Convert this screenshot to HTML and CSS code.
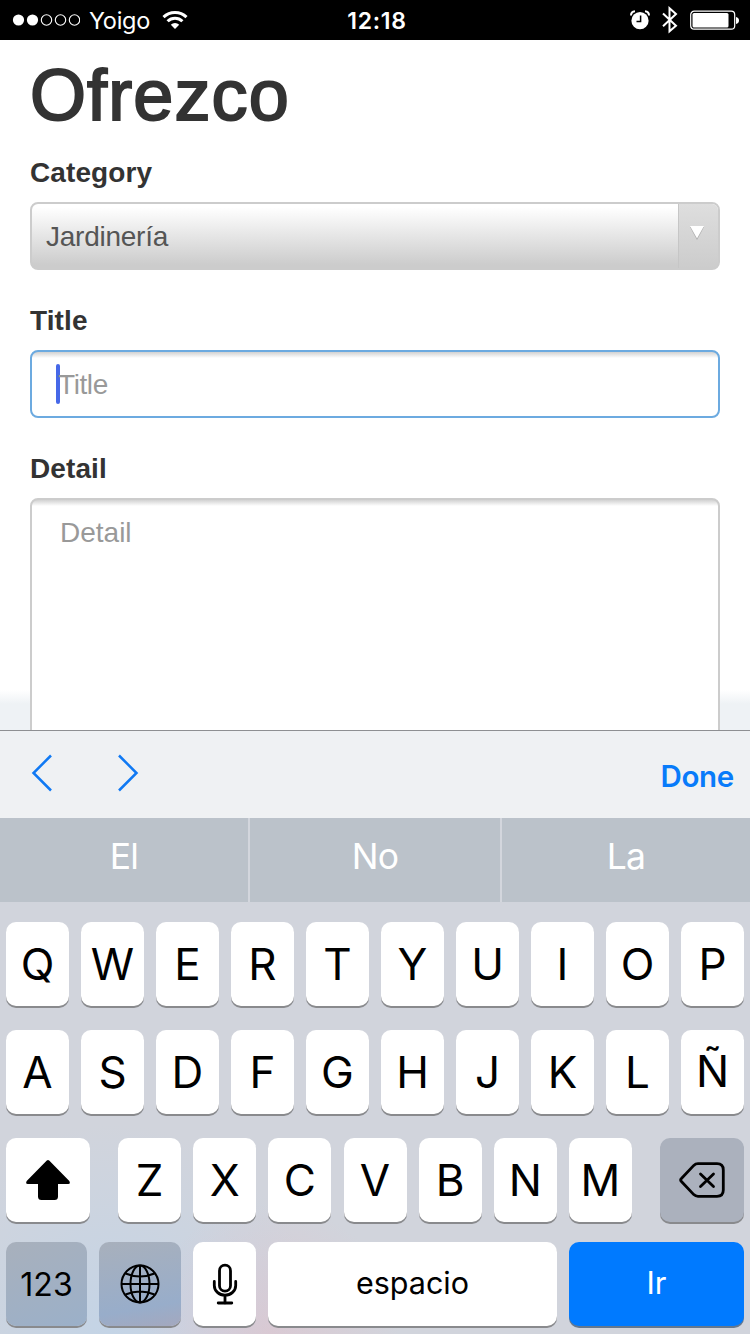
FILE: index.html
```html
<!DOCTYPE html>
<html lang="es">
<head>
<meta charset="utf-8">
<title>Ofrezco</title>
<link rel="stylesheet" href="styles.css">
</head>
<body>
<header class="status">
  <div class="carrier">
    <svg class="signal" width="68" height="12" viewBox="0 0 68 12"><g fill="#fff"><circle cx="6.500" cy="6" r="5.6"/><circle cx="20.500" cy="6" r="5.6"/></g><g fill="none" stroke="#fff" stroke-width="1.1"><circle cx="34.500" cy="6" r="5.2"/><circle cx="48.500" cy="6" r="5.2"/><circle cx="62.500" cy="6" r="5.2"/></g></svg>
    <span class="carrier-name">Yoigo</span>
    <svg width="26" height="20" viewBox="0 0 26 20"><g fill="none" stroke="#fff" stroke-width="3"><path d="M1.5 7.2a16.5 16.5 0 0 1 23 0"/><path d="M5.6 11.3a10.5 10.5 0 0 1 14.8 0"/></g><path d="M13 19l-4.2-4.2a6 6 0 0 1 8.4 0z" fill="#fff"/></svg>
  </div>
  <span class="clock">12:18</span>
  <div class="indicators">
    <svg width="20" height="20" viewBox="0 0 20 20"><circle cx="10" cy="10.7" r="8.6" fill="#fff"/><path d="M1 5.5Q1 1.6 5 1.3M15 1.3Q19 1.6 19 5.5" fill="none" stroke="#fff" stroke-width="2"/><path d="M10.6 5.5v6H6.5" fill="none" stroke="#000" stroke-width="1.5"/></svg>
    <svg width="16" height="28" viewBox="0 0 16 28"><path d="M1 7.5l13 12.2-6.5 5.6V2.2L14 8 1 20.2" fill="none" stroke="#fff" stroke-width="2"/></svg>
    <svg width="50" height="20" viewBox="0 0 50 20"><rect x=".7" y="1.2" width="44" height="18" rx="3.5" fill="none" stroke="#fff" stroke-width="1.2"/><rect x="2.5" y="3" width="36" height="14.5" rx="1.5" fill="#fff"/><path d="M46 7c4 .4 4 6.600 0 7z" fill="#fff"/></svg>
  </div>
</header>
<main class="page">
  <h1 class="heading">Ofrezco</h1>
  <div class="field">
    <label class="label">Category</label>
    <div class="control select"><span class="select-value">Jardinería</span><span class="select-arrow"><svg width="16" height="16" viewBox="0 0 16 16"><path d="M1 2h14L8 15z" fill="#aaa"/><path d="M1 1h14L8 13.500z" fill="#fff"/></svg></span></div>
  </div>
  <div class="field">
    <label class="label">Title</label>
    <div class="control input focused"><span class="caret"></span><span class="placeholder">Title</span></div>
  </div>
  <div class="field">
    <label class="label">Detail</label>
    <div class="control input textarea"><span class="placeholder">Detail</span></div>
  </div>
</main>
<nav class="toolbar">
  <div class="arrows">
    <svg width="22" height="38" viewBox="0 0 22 38"><path d="M20 1.500L2.500 19 20 36.500" fill="none" stroke="#1079f3" stroke-width="2.500"/></svg>
    <svg width="22" height="38" viewBox="0 0 22 38"><path d="M2 1.500L19.500 19 2 36.500" fill="none" stroke="#1079f3" stroke-width="2.500"/></svg>
  </div>
  <span class="done">Done</span>
</nav>
<section class="suggestions"><span>El</span><span>No</span><span>La</span></section>
<section class="keyboard">
  <div class="row ten"><b class="key">Q</b><b class="key">W</b><b class="key">E</b><b class="key">R</b><b class="key">T</b><b class="key">Y</b><b class="key">U</b><b class="key">I</b><b class="key">O</b><b class="key">P</b></div>
  <div class="row ten"><b class="key">A</b><b class="key">S</b><b class="key">D</b><b class="key">F</b><b class="key">G</b><b class="key">H</b><b class="key">J</b><b class="key">K</b><b class="key">L</b><b class="key enye">Ñ</b></div>
  <div class="row shift-row">
    <b class="key wide"><svg width="46" height="42" viewBox="0 0 46 42"><path d="M21.800 1.500q1.200-1 2.400 0L44.300 22q1.500 3-1 3H33v12.500q0 3.500-3.500 3.500h-13Q13 41 13 37.500V25H2.700q-2.500 0-1-3z"/></svg></b>
    <div class="letters"><b class="key">Z</b><b class="key">X</b><b class="key">C</b><b class="key">V</b><b class="key">B</b><b class="key">N</b><b class="key">M</b></div>
    <b class="key wide dark"><svg width="46" height="36" viewBox="0 0 46 36"><g fill="none" stroke="#000" stroke-width="2.800" stroke-linejoin="round" stroke-linecap="round"><path d="M19 1.700h19q6.300 0 6.300 6.300v20q0 6.300-6.300 6.300H19q-2.500 0-4.200-1.700L2.200 19.200q-1.200-1.200 0-2.400L14.800 3.400Q16.500 1.700 19 1.700z"/><path d="M21.500 12l13 12.500M34.500 12l-13 12.500"/></g></svg></b>
  </div>
  <div class="row bottom">
    <b class="key dark numbers">123</b>
    <b class="key dark globe"><svg width="40" height="40" viewBox="0 0 40 40"><g fill="none" stroke="#000" stroke-width="2"><circle cx="20" cy="20" r="18.500"/><ellipse cx="20" cy="20" rx="9.500" ry="18.500"/><path d="M20 1.500v37M1.500 20h37M5.500 9.500q14.500 6 29 0M5.500 30.500q14.500-6 29 0"/></g></svg></b>
    <b class="key"><svg width="26" height="42" viewBox="0 0 26 42"><g fill="none" stroke="#000" stroke-width="2.800" stroke-linecap="round"><rect x="7.500" y="2.200" width="11" height="26" rx="5.500"/><path d="M2.300 18.500v4a10.700 9.700 0 0 0 21.400 0v-4M13 32.500v7.800M6.200 40h13.600"/></g></svg></b>
    <b class="key space">espacio</b>
    <b class="key go">Ir</b>
  </div>
</section>
</body>
</html>
```
FILE: styles.css
```css
* { box-sizing: border-box; }
body {
  margin: 0;
  width: 750px;
  height: 1334px;
  overflow: hidden;
  display: flex;
  flex-direction: column;
  background: #fff;
  font-family: Inter, "Liberation Sans", sans-serif;
}
svg { display: block; flex: none; }

.status {
  height: 40px;
  flex: none;
  padding: 0 10px 0 12px;
  display: grid;
  grid-template-columns: 1fr auto 1fr;
  align-items: center;
  background: #000;
  color: #fff;
}
.carrier { display: flex; align-items: center; font-size: 23.500px; }
.carrier-name { margin: 0 12px 0 9px; letter-spacing: -.3px; padding-top: 1px; }
.clock { font-size: 23px; font-weight: 600; letter-spacing: .7px; padding: 2px 0 0 2px; }
.indicators { display: flex; justify-content: flex-end; align-items: center; gap: 12px; }

.page {
  height: 690px;
  flex: none;
  overflow: hidden;
  padding: 15px 30px 0;
  font-family: "Liberation Sans", Arial, sans-serif;
  background: linear-gradient(#fff 650px, #eef2f5 664px);
}
.heading {
  margin: 0 0 17px;
  font-size: 72px;
  line-height: 80px;
  font-weight: 400;
  letter-spacing: 1.100px;
  color: #333;
  -webkit-text-stroke: 2px #333;
}
.field { margin-bottom: 30px; }
.label {
  display: block;
  margin-bottom: 10px;
  padding-top: 1px;
  line-height: 39px;
  height: 40px;
  font-size: 28px;
  line-height: 40px;
  font-weight: 700;
  letter-spacing: .1px;
  color: #333;
}
.control {
  height: 68px;
  display: flex;
  border: 2px solid #ccc;
  border-radius: 8px;
  font-size: 28px;
  line-height: 66px;
  letter-spacing: -.25px;
}
.select {
  color: #555;
  justify-content: space-between;
  background: linear-gradient(#fff 5%, #ccc 95%);
}
.select-value { padding-left: 14px; }
.select-arrow {
  width: 40px;
  padding: 21px 0 0 10px;
  border-left: 1px solid #c6c6c6;
  border-radius: 0 6px 6px 0;
  background: linear-gradient(#dedede, #ccc);
}
.input {
  padding-left: 24px;
  color: #999;
  background: linear-gradient(#d2d2d2, #fff 6px);
}
.focused { border-color: #6caae0; letter-spacing: -.4px; }
.caret { width: 4px; height: 40px; margin-top: 12px; border-radius: 2px; background: #4668e8; }
.focused .placeholder { margin-left: -2px; }
.textarea { height: 300px; padding-left: 28px; letter-spacing: 0; }

.toolbar {
  height: 88px;
  flex: none;
  padding: 0 16px 0 31px;
  display: flex;
  align-items: center;
  justify-content: space-between;
  border-top: 1px solid #8e8f92;
  background: #eff1f3;
}
.arrows { display: flex; gap: 64px; padding-bottom: 3px; }
.done { color: #087bfa; font-size: 29.500px; font-weight: 600; padding-top: 2px; letter-spacing: -.3px; }

.suggestions {
  height: 84px;
  flex: none;
  display: grid;
  grid-template-columns: 248px 250px 248px;
  gap: 2px;
  background: #d3d6dd;
}
.suggestions span {
  background: #bbc2ca;
  color: #fff;
  text-align: center;
  font-size: 35.500px;
  line-height: 77px;
  letter-spacing: -.8px;
}

.keyboard {
  height: 432px;
  flex: none;
  padding: 20px 6px 0;
  background:
    radial-gradient(circle at 270px 432px, rgba(228, 190, 200, .5), transparent 130px),
    radial-gradient(circle at 110px 432px, rgba(185, 212, 238, .55), transparent 210px),
    #d1d4dc;
}
.row { display: flex; height: 84px; margin-bottom: 24px; }
.ten, .letters { gap: 12px; }
.key {
  width: 63px;
  height: 84px;
  flex: none;
  display: flex;
  align-items: center;
  justify-content: center;
  padding-bottom: 1px;
  border-radius: 10px;
  background: #fff;
  box-shadow: 0 2px 0 #898a8d;
  color: #000;
  font-size: 44px;
  font-weight: 400;
}
.enye { padding-bottom: 3px; }
.shift-row { justify-content: space-between; margin-bottom: 20px; }
.letters { display: flex; gap: 12.170px; }
.wide { width: 84px; }
.dark { background: #abb1bd; }
.bottom { gap: 12px; }
.numbers { width: 81px; font-size: 32px; padding-top: 1px; background: linear-gradient(160deg, #a8b0bc, #9bb0c9); }
.globe { width: 82px; background: linear-gradient(170deg, #a8b0bc, #98adca 75%, #a4a8be); }
.space { width: 289px; font-size: 30.500px; padding-bottom: 4px; }
.go { width: 175px; font-size: 31px; padding-bottom: 4px; color: #fff; background: #007aff; box-shadow: 0 2px 0 #64788f; }
```
